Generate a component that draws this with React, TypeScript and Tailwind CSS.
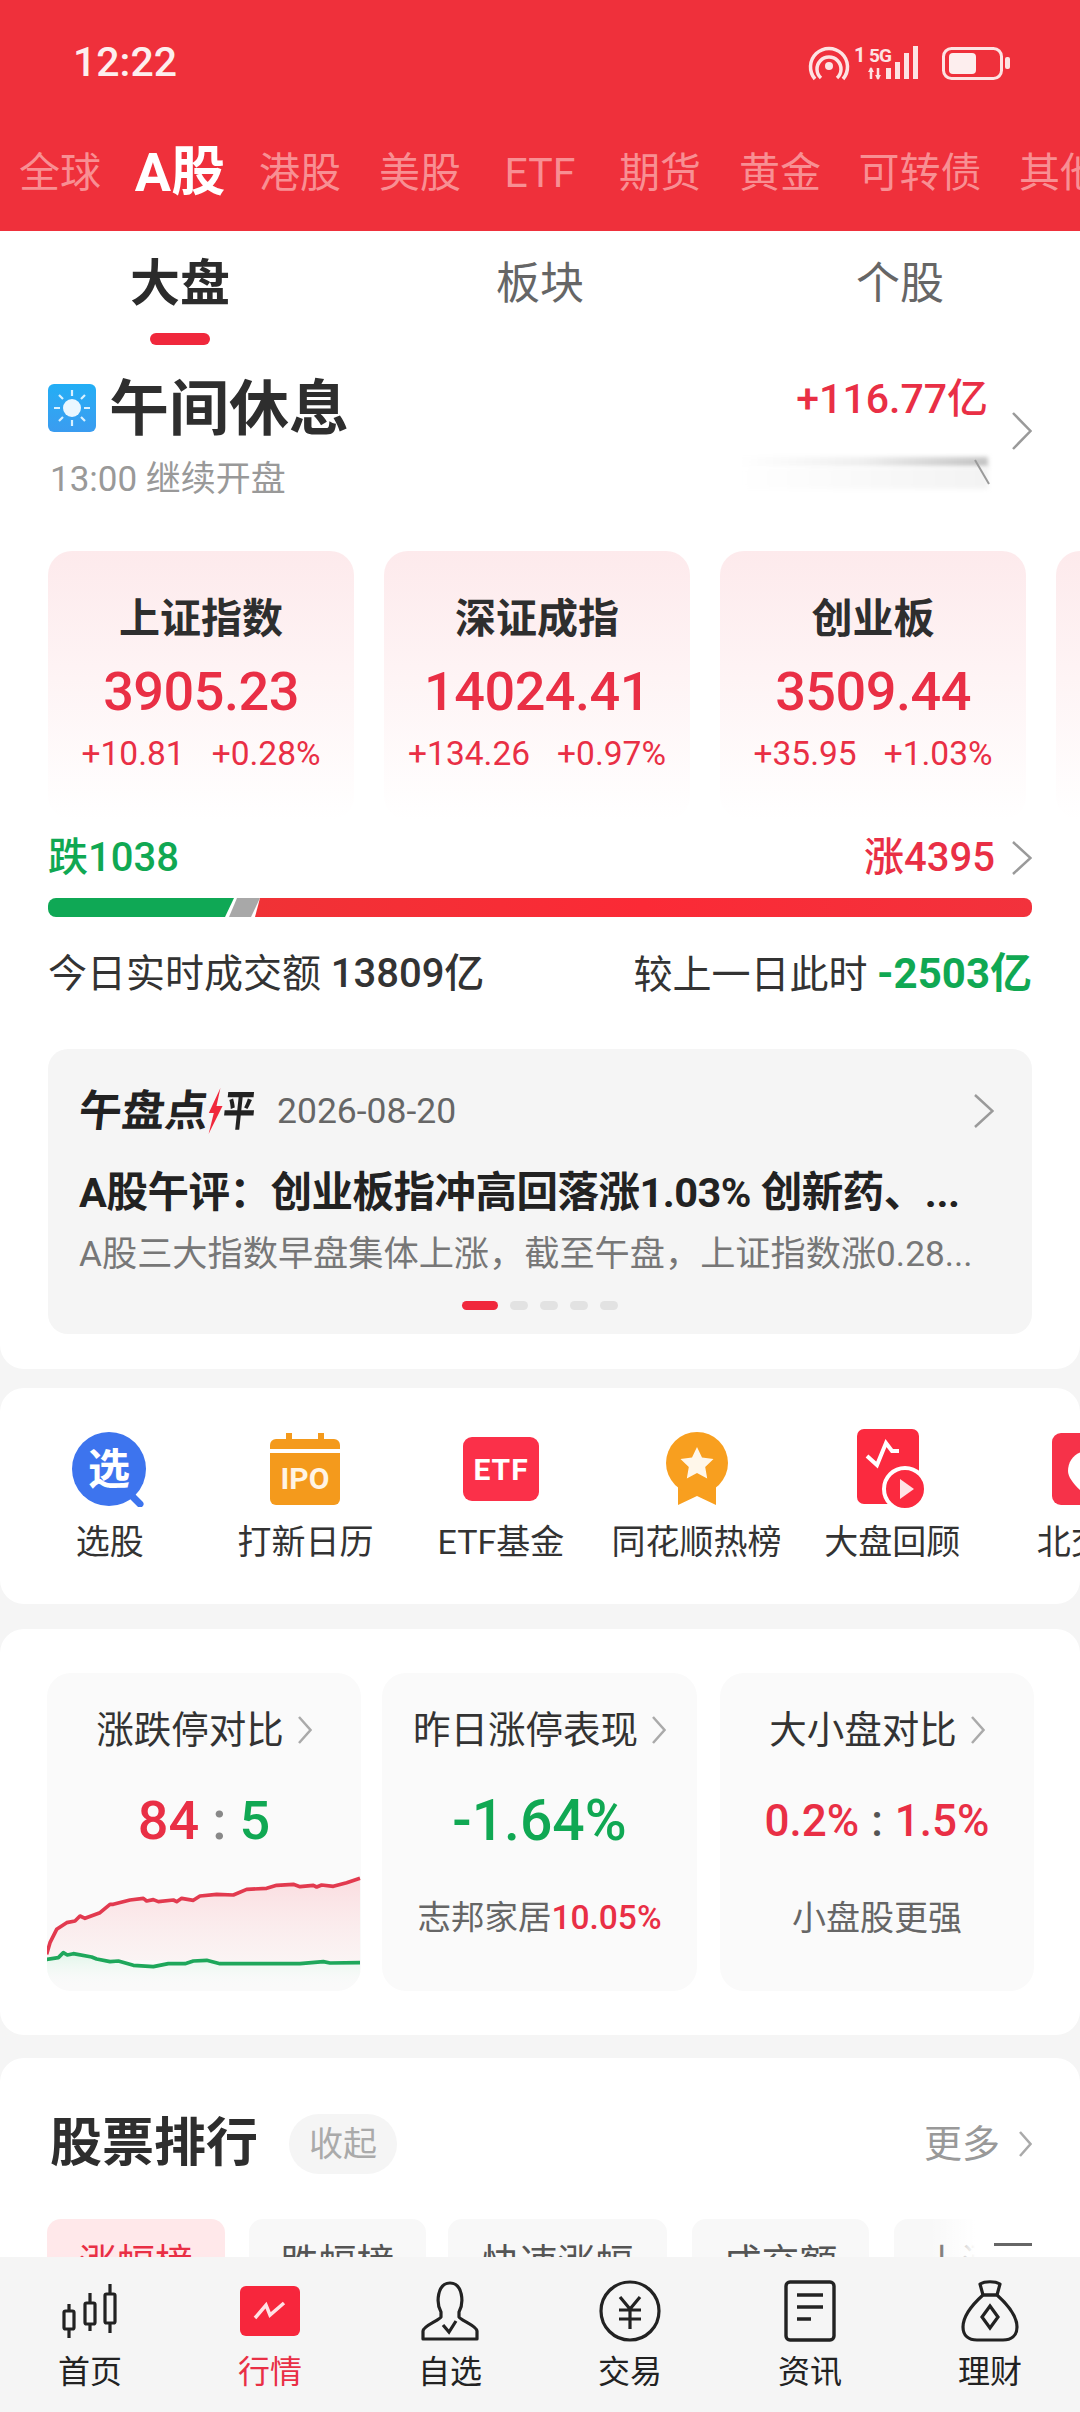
import React from 'react';

const RED = 'text-[#e92f45]';
const GREEN = 'text-[#10a853]';

const Chev = ({ w, h, color = '#9a9a9a', sw = 2.5 }: { w: number; h: number; color?: string; sw?: number }) => (
  <svg width={w} height={h} viewBox={`0 0 ${w} ${h}`} fill="none" className="shrink-0">
    <polyline points={`1,1 ${w - 1.5},${h / 2} 1,${h - 1}`} stroke={color} strokeWidth={sw} />
  </svg>
);

const topTabs = [
  { label: '全球', cls: 'w-[120px] text-[41px] text-[#f88f93]' },
  { label: 'A股', cls: 'w-[120px] text-[54px] font-bold text-white' },
  { label: '港股', cls: 'w-[120px] text-[41px] text-[#f88f93]' },
  { label: '美股', cls: 'w-[120px] text-[41px] text-[#f88f93]' },
  { label: 'ETF', cls: 'w-[120px] text-[41px] text-[#f88f93]' },
  { label: '期货', cls: 'w-[120px] text-[41px] text-[#f88f93]' },
  { label: '黄金', cls: 'w-[120px] text-[41px] text-[#f88f93]' },
  { label: '可转债', cls: 'w-[160px] text-[41px] text-[#f88f93]' },
  { label: '其他', cls: 'w-[120px] text-[41px] text-[#f88f93]' },
];

const indexes = [
  { name: '上证指数', value: '3905.23', diff: '+10.81', pct: '+0.28%' },
  { name: '深证成指', value: '14024.41', diff: '+134.26', pct: '+0.97%' },
  { name: '创业板', value: '3509.44', diff: '+35.95', pct: '+1.03%' },
];

const StatusIcons = () => (
  <svg width="204" height="38" viewBox="0 0 204 38" fill="none" stroke="#fde3e3">
    <circle cx="21" cy="22" r="4" fill="#fde3e3" stroke="none" />
    <path d="M13 34 A12 12 0 1 1 29 34" strokeWidth="3.5" />
    <path d="M7 35 A18.5 18.5 0 1 1 35 35" strokeWidth="3.5" />
    <text x="46" y="18" fontSize="20" fontWeight="700" fill="#fde3e3" stroke="none">1</text>
    <text x="61" y="18" fontSize="19" fontWeight="700" fill="#fde3e3" stroke="none" letterSpacing="-1">5G</text>
    <path d="M63 24v11M70 24v11" strokeWidth="2.5" />
    <path d="M63 23l-3 5h6zM70 36l-3-5h6z" fill="#fde3e3" stroke="none" />
    <rect x="78" y="24" width="5" height="11" fill="#fde3e3" stroke="none" />
    <rect x="87" y="18" width="5" height="17" fill="#fde3e3" stroke="none" />
    <rect x="96" y="9" width="5" height="26" fill="#fde3e3" stroke="none" />
    <rect x="105" y="2" width="5" height="33" fill="#fde3e3" stroke="none" />
    <rect x="135.5" y="4.5" width="58" height="30" rx="8" strokeWidth="3" />
    <rect x="141" y="9" width="27" height="21" rx="4" fill="#fdeeee" stroke="none" />
    <rect x="197" y="13" width="5" height="12" rx="2" fill="#fde3e3" stroke="none" />
  </svg>
);

const SunIcon = () => (
  <div className="flex h-[48px] w-[48px] items-center justify-center rounded-[6px] bg-gradient-to-b from-[#22aef5] to-[#3a9cf0]">
    <svg width="40" height="40" viewBox="0 0 40 40" stroke="#d9f1ff" strokeWidth="2.2">
      <circle cx="20" cy="20" r="9" fill="#eaf7ff" stroke="none" />
      <path d="M20 2v6M20 32v6M2 20h6M32 20h6M7 7l4 4M29 29l4 4M33 7l-4 4M11 29l-4 4" />
    </svg>
  </div>
);

const BreadthBar = () => (
  <svg width="984" height="19" viewBox="0 0 984 19" className="block">
    <defs>
      <linearGradient id="barRed" x1="0" x2="1" y1="0" y2="0">
        <stop offset="0" stopColor="#f03236" />
        <stop offset="0.5" stopColor="#fb2a36" />
        <stop offset="1" stopColor="#f2323c" />
      </linearGradient>
    </defs>
    <path d="M8 0H186L177 19H8a8 8 0 0 1-8-8V8a8 8 0 0 1 8-8z" fill="#0fa855" />
    <path d="M189 0H212L203 19H181z" fill="#a8a8a8" />
    <path d="M212 0H976a8 8 0 0 1 8 8v3a8 8 0 0 1-8 8H207z" fill="url(#barRed)" />
  </svg>
);

const shortcuts = [
  {
    label: '选股',
    icon: (
      <svg width="78" height="76" viewBox="0 0 78 76">
        <path d="M58 62l11 11" stroke="#3d74ee" strokeWidth="7" strokeLinecap="round" />
        <circle cx="38" cy="38" r="37" fill="#3d74ee" />
        <text x="38" y="53" textAnchor="middle" fontSize="42" fontWeight="700" fill="#fff">选</text>
      </svg>
    ),
  },
  {
    label: '打新日历',
    icon: (
      <svg width="70" height="72" viewBox="0 0 70 72">
        <path d="M16 0h6v6h26V0h6v6h10a6 6 0 0 1 6 6v4H0v-4a6 6 0 0 1 6-6h10z" fill="#f49a1c" />
        <path d="M0 20h70v46a6 6 0 0 1-6 6H6a6 6 0 0 1-6-6z" fill="#f49a1c" />
        <text x="35" y="56" textAnchor="middle" fontSize="30" fontWeight="700" fill="#fff4e4">IPO</text>
      </svg>
    ),
  },
  {
    label: 'ETF基金',
    icon: (
      <svg width="76" height="64" viewBox="0 0 76 64">
        <rect width="76" height="64" rx="9" fill="#fb3049" />
        <text x="38" y="43" textAnchor="middle" fontSize="30" fontWeight="700" fill="#fff" letterSpacing="1">ETF</text>
      </svg>
    ),
  },
  {
    label: '同花顺热榜',
    icon: (
      <svg width="62" height="74" viewBox="0 0 62 74">
        <path d="M12 50v23l19-9 19 9V50z" fill="#f89f1f" />
        <circle cx="31" cy="31" r="31" fill="#f89f1f" />
        <path d="M31 15l5 10.5 11.5 1.5-8.3 8 2 11.5L31 41l-10.2 5.5 2-11.5-8.3-8L26 25.5z" fill="#fff7ea" />
      </svg>
    ),
  },
  {
    label: '大盘回顾',
    icon: (
      <svg width="70" height="80" viewBox="0 0 70 80">
        <rect width="62" height="75" rx="7" fill="#fb2a3f" />
        <polyline points="10,27 20,36 29,14 35,22 42,22" fill="none" stroke="#fff" strokeWidth="4" />
        <circle cx="48" cy="60" r="21" fill="#fb2a3f" stroke="#fff" strokeWidth="4" />
        <path d="M43 50l14 10-14 10z" fill="#ffe3e6" />
      </svg>
    ),
  },
  {
    label: '北交所',
    icon: (
      <svg width="72" height="72" viewBox="0 0 72 72">
        <rect width="72" height="72" rx="9" fill="#f63249" />
        <path d="M36 18c-12 0-20 9-20 20 0 8 10 18 20 26 10-8 20-18 20-26 0-11-8-20-20-20z" fill="#fff" />
      </svg>
    ),
  },
];

const redLine =
  'M50 340L60 305L80 265L95 255L110 245L135 240L150 225L165 232L210 215L240 190L250 190L300 177L340 172L350 180L370 176L385 182L430 177L440 182L455 172L490 178L510 165L560 160L610 162L650 145L710 142L740 133L790 130L810 137L850 133L860 138L875 132L910 136L950 125L990 112';
const greenLine =
  'M50 355L85 350L100 335L112 342L130 338L185 348L200 354L240 362L265 360L310 373L370 377L415 368L465 368L490 360L530 358L570 368L810 368L880 362L900 366L990 365';

const LimitChart = () => (
  <svg width="340" height="160" viewBox="0 0 1020 480" fill="none" className="absolute left-[-17px] top-[168px]">
    <defs>
      <linearGradient id="pinkFill" x1="0" x2="0" y1="0" y2="1">
        <stop offset="0" stopColor="#fbdde0" />
        <stop offset="1" stopColor="#fbeeee" stopOpacity="0.5" />
      </linearGradient>
      <linearGradient id="greenFill" x1="0" x2="0" y1="0" y2="1">
        <stop offset="0" stopColor="#dff6e8" />
        <stop offset="1" stopColor="#fafafa" stopOpacity="0" />
      </linearGradient>
    </defs>
    <path d={`${redLine}L990 365L50 355Z`} fill="url(#pinkFill)" />
    <path d={`${greenLine}L990 440L50 440Z`} fill="url(#greenFill)" />
    <path d={redLine} stroke="#e23a4f" strokeWidth="11" strokeLinejoin="round" />
    <path d={greenLine} stroke="#1ea75b" strokeWidth="11" strokeLinejoin="round" />
  </svg>
);

const navItems = [
  {
    label: '首页',
    cls: 'text-[#222]',
    icon: (
      <svg width="60" height="60" viewBox="0 0 60 60" fill="none" stroke="#222" strokeWidth="3.2">
        <path d="M9 23v7M9 48v9M30 12v10M30 43v7M50 3v10M50 42v10" />
        <rect x="4" y="30" width="10" height="18" rx="1.5" />
        <rect x="25" y="22" width="10" height="21" rx="1.5" />
        <rect x="45" y="13" width="10" height="29" rx="1.5" />
      </svg>
    ),
  },
  {
    label: '行情',
    cls: RED,
    icon: (
      <svg width="60" height="60" viewBox="0 0 60 60" fill="none">
        <rect y="5" width="60" height="50" rx="6" fill="#f7263c" />
        <polyline points="15,37 26,24 30,34 44,22" stroke="#ffe1e4" strokeWidth="3.5" />
      </svg>
    ),
  },
  {
    label: '自选',
    cls: 'text-[#222]',
    icon: (
      <svg width="60" height="60" viewBox="0 0 60 60" fill="none" stroke="#222" strokeWidth="3.2">
        <path d="M21 31C16 22 17 2 30 2C43 2 44 22 39 31L39 36C40 39 57 45 57 50L57 58L3 58L3 50C3 45 20 39 21 36Z" strokeLinejoin="round" />
        <polyline points="23,44 29,51 36,40" />
      </svg>
    ),
  },
  {
    label: '交易',
    cls: 'text-[#222]',
    icon: (
      <svg width="62" height="62" viewBox="0 0 62 62" fill="none" stroke="#222" strokeWidth="3.2">
        <ellipse cx="31" cy="31" rx="29" ry="29" />
        <path d="M21 17l10 12 10-12M20 30h22M20 39h22M31 29v20" />
      </svg>
    ),
  },
  {
    label: '资讯',
    cls: 'text-[#222]',
    icon: (
      <svg width="52" height="62" viewBox="0 0 52 62" fill="none" stroke="#222" strokeWidth="3.4">
        <rect x="2" y="2" width="48" height="58" rx="4" />
        <path d="M13 15h26M13 27h26M13 39h14" />
      </svg>
    ),
  },
  {
    label: '理财',
    cls: 'text-[#222]',
    icon: (
      <svg width="58" height="62" viewBox="0 0 58 62" fill="none" stroke="#222" strokeWidth="3.2">
        <path d="M19 4c5-3 15-3 20 0l-3 11H22z" strokeLinejoin="round" />
        <path d="M22 15C12 24 2 36 2 47c0 9 6 13 14 13h26c8 0 14-4 14-13 0-11-10-23-20-32z" />
        <path d="M29 26l8 11-8 11-8-11z" />
      </svg>
    ),
  },
];

export default function App() {
  return (
    <div className="relative h-[2412px] w-[1080px] overflow-hidden bg-[#f5f5f5] font-[Roboto,'Noto_Sans_CJK_SC',sans-serif] text-[#333]">
      {/* Red header */}
      <div className="h-[231px] bg-[#ef303b]">
        <div className="flex h-[124px] items-center justify-between pl-[73px] pr-[68px] pt-[2px]">
          <span className="text-[41px] font-medium text-[#fdeeee]">12:22</span>
          <StatusIcons />
        </div>
        <div className="flex h-[94px] items-center overflow-hidden pt-[4px]">
          {topTabs.map((tab) => (
            <div key={tab.label} className={`shrink-0 text-center leading-[60px] ${tab.cls}`}>
              {tab.label}
            </div>
          ))}
        </div>
      </div>

      {/* Market section */}
      <div className="rounded-b-[24px] bg-white pb-[35px]">
        <div className="grid h-[114px] grid-cols-3">
          <div className="flex flex-col items-center pt-[23px]">
            <span className="text-[50px] font-bold leading-[60px] text-[#2b2b2b]">大盘</span>
            <span className="mt-[19px] h-[12px] w-[60px] rounded-full bg-[#f0283c]" />
          </div>
          <div className="pt-[23px] text-center text-[44px] leading-[60px] text-[#666]">板块</div>
          <div className="pt-[23px] text-center text-[44px] leading-[60px] text-[#666]">个股</div>
        </div>

        <div className="flex justify-between pl-[48px] pr-[48px] pt-[28px]">
          <div>
            <div className="flex items-center gap-[13px] pt-[3px]">
              <SunIcon />
              <span className="pt-[3px] text-[60px] font-bold leading-[61px] text-[#2e2e2e]">午间休息</span>
            </div>
            <div className="mt-[18px] pl-[2px] text-[35px] leading-[44px] text-[#999]">13:00 继续开盘</div>
          </div>
          <div className="flex items-start gap-[24px]">
            <div className="relative flex w-[250px] flex-col items-end pt-[1px]">
              <span className={`text-[41px] font-medium leading-[50px] ${RED}`}>+116.77亿</span>
              <div className="mt-[33px] h-[10px] w-[250px] bg-gradient-to-r from-white via-[#efefef] to-[#c4c4c4] blur-[2px]" />
              <div className="h-[22px] w-[250px] bg-gradient-to-r from-white to-[#f3f3f3] blur-[2px]" />
              <svg width="18" height="26" viewBox="0 0 18 26" fill="none" className="absolute right-[-3px] top-[86px]">
                <path d="M2 1l14 24" stroke="#9a9a9a" strokeWidth="2" />
              </svg>
            </div>
            <div className="pt-[39px]">
              <Chev w={20} h={38} />
            </div>
          </div>
        </div>

        <div className="mt-[49px] flex gap-[30px] overflow-hidden pl-[48px]">
          {indexes.map((item) => (
            <div
              key={item.name}
              className="h-[269px] w-[306px] shrink-0 rounded-[24px] bg-gradient-to-b from-[#fdeaec] to-white pt-[43px] text-center"
            >
              <div className="text-[41px] font-bold leading-[50px] text-[#2e2e2e]">{item.name}</div>
              <div className={`mt-[16px] text-[54px] font-medium leading-[64px] tracking-[-0.5px] ${RED}`}>{item.value}</div>
              <div className={`mt-[10px] flex justify-center gap-[27px] text-[33.5px] leading-[40px] ${RED}`}>
                <span>{item.diff}</span>
                <span>{item.pct}</span>
              </div>
            </div>
          ))}
          <div className="h-[269px] w-[306px] shrink-0 rounded-[24px] bg-gradient-to-b from-[#fdeaec] to-white" />
        </div>

        <div className="mt-[15px] flex items-center justify-between px-[48px] text-[40px] font-medium leading-[46px]">
          <span className={GREEN}>跌1038</span>
          <div className="flex items-center gap-[17px]">
            <span className={RED}>涨4395</span>
            <Chev w={20} h={34} />
          </div>
        </div>

        <div className="mt-[17px] px-[48px]">
          <BreadthBar />
        </div>

        <div className="mt-[32px] flex justify-between px-[48px] text-[39px] leading-[50px] text-[#333]">
          <span>
            今日实时成交额 <span className="text-[40px] font-medium">13809亿</span>
          </span>
          <span>
            较上一日此时 <span className={`text-[42px] font-bold ${GREEN}`}>-2503亿</span>
          </span>
        </div>

        <div className="mx-[48px] mt-[49px] h-[285px] rounded-[20px] bg-[#f5f5f5] px-[31px] pt-[37px]">
          <div className="flex items-center justify-between pr-[7px]">
            <div className="flex items-center">
              <div className="flex h-[50px] w-[198px] -skew-x-6 items-center text-[43px] font-bold leading-[50px] text-[#222]">
                <span>午盘点</span>
                <svg width="15" height="46" viewBox="0 0 15 46" className="shrink-0">
                  <path d="M10 0L1 25h5L3 46 14 18H8z" fill="#f0283c" />
                </svg>
                <span className="inline-block w-[28px] origin-left scale-x-75">平</span>
              </div>
              <span className="text-[35.5px] leading-[50px] text-[#666]">2026-08-20</span>
            </div>
            <Chev w={20} h={34} />
          </div>
          <div className="mt-[32px] whitespace-nowrap text-[41.5px] font-bold leading-[50px] tracking-[-0.5px] text-[#222]">
            A股午评：创业板指冲高回落涨1.03% 创新药、...
          </div>
          <div className="mt-[14px] whitespace-nowrap text-[35.2px] leading-[44px] text-[#777]">
            A股三大指数早盘集体上涨，截至午盘，上证指数涨0.28...
          </div>
          <div className="mt-[25px] flex justify-center gap-[12px]">
            <span className="h-[9px] w-[36px] rounded-full bg-[#f0283c]" />
            <span className="h-[9px] w-[18px] rounded-full bg-[#e2e2e2]" />
            <span className="h-[9px] w-[18px] rounded-full bg-[#e2e2e2]" />
            <span className="h-[9px] w-[18px] rounded-full bg-[#e2e2e2]" />
            <span className="h-[9px] w-[18px] rounded-full bg-[#e2e2e2]" />
          </div>
        </div>
      </div>

      {/* Shortcuts */}
      <div className="mt-[19px] flex h-[216px] overflow-hidden rounded-[24px] bg-white pl-[12px] pt-[41px]">
        {shortcuts.map((item) => (
          <div key={item.label} className="flex w-[195.6px] shrink-0 flex-col items-center">
            <div className="flex h-[80px] items-center justify-center">{item.icon}</div>
            <span className="mt-[11px] whitespace-nowrap text-[34px] leading-[44px] text-[#333]">{item.label}</span>
          </div>
        ))}
      </div>

      {/* Stats */}
      <div className="mt-[25px] flex h-[406px] rounded-[24px] bg-white pl-[47px] pt-[44px]">
        <div className="relative h-[318px] w-[314px] overflow-hidden rounded-[24px] bg-[#fafafa] pt-[33px] text-center">
          <div className="flex items-center justify-center gap-[14px] text-[37.5px] leading-[48px] text-[#333]">
            涨跌停对比 <Chev w={14} h={28} color="#aaa" />
          </div>
          <div className="mt-[35px] text-[54px] font-medium leading-[64px]">
            <span className={RED}>84</span>
            <span className="mx-[13px] text-[#888]">:</span>
            <span className={GREEN}>5</span>
          </div>
          <LimitChart />
        </div>
        <div className="ml-[21px] h-[318px] w-[315px] rounded-[24px] bg-[#fafafa] pt-[33px] text-center">
          <div className="flex items-center justify-center gap-[14px] text-[37.5px] leading-[48px] text-[#333]">
            昨日涨停表现 <Chev w={14} h={28} color="#aaa" />
          </div>
          <div className={`mt-[35px] text-[57px] font-medium leading-[64px] ${GREEN}`}>-1.64%</div>
          <div className="mt-[43px] whitespace-nowrap text-[33.5px] leading-[44px] text-[#666]">
            志邦家居<span className={`font-medium ${RED}`}>10.05%</span>
          </div>
        </div>
        <div className="ml-[23px] h-[318px] w-[314px] rounded-[24px] bg-[#fafafa] pt-[33px] text-center">
          <div className="flex items-center justify-center gap-[14px] text-[37.5px] leading-[48px] text-[#333]">
            大小盘对比 <Chev w={14} h={28} color="#aaa" />
          </div>
          <div className={`mt-[35px] text-[44px] font-medium leading-[64px] ${RED}`}>
            0.2%<span className="mx-[12px] text-[#555]">:</span>1.5%
          </div>
          <div className="mt-[43px] text-[34px] leading-[44px] text-[#666]">小盘股更强</div>
        </div>
      </div>

      {/* Ranking */}
      <div className="relative mt-[23px] h-[400px] rounded-[24px] bg-white pt-[54px]">
        <div className="flex items-center justify-between pl-[50px] pr-[48px]">
          <div className="flex items-center gap-[31px]">
            <span className="text-[52px] font-bold leading-[64px] text-[#2e2e2e]">股票排行</span>
            <span className="rounded-full bg-[#f5f5f5] px-[20px] text-[34px] leading-[60px] text-[#aaa]">收起</span>
          </div>
          <div className="flex items-center gap-[19px]">
            <span className="text-[38px] leading-[50px] text-[#999]">更多</span>
            <Chev w={13} h={26} color="#aaa" />
          </div>
        </div>
        <div className="mt-[43px] flex pl-[47px]">
          <div className="h-[80px] w-[178px] shrink-0 rounded-[14px] bg-[#ffe8ea] pt-[20px] text-center text-[38px] leading-[48px] text-[#e92f45]">涨幅榜</div>
          <div className="ml-[24px] h-[80px] w-[177px] shrink-0 rounded-[14px] bg-[#f8f8f8] pt-[20px] text-center text-[38px] leading-[48px] text-[#555]">跌幅榜</div>
          <div className="ml-[22px] h-[80px] w-[219px] shrink-0 rounded-[14px] bg-[#f8f8f8] pt-[20px] text-center text-[38px] leading-[48px] text-[#555]">快速涨幅</div>
          <div className="ml-[25px] h-[80px] w-[177px] shrink-0 rounded-[14px] bg-[#f8f8f8] pt-[20px] text-center text-[38px] leading-[48px] text-[#555]">成交额</div>
          <div className="ml-[25px] h-[80px] w-[120px] shrink-0 rounded-[14px] bg-[#f8f8f8] pl-[30px] pt-[20px] text-[38px] leading-[48px] text-[#555]">上涨</div>
        </div>
        <div className="absolute right-0 top-[160px] h-[100px] w-[150px] bg-gradient-to-r from-transparent to-white to-[30%] pl-[64px] pt-[25px]">
          <div className="h-[3px] w-[38px] bg-[#666]" />
          <div className="mt-[12px] h-[3px] w-[38px] bg-[#666]" />
        </div>
      </div>

      {/* Bottom nav */}
      <div className="absolute bottom-0 left-0 grid h-[155px] w-full grid-cols-6 bg-[#f5f5f5]">
        {navItems.map((item) => (
          <div key={item.label} className="flex flex-col items-center pt-[23px]">
            <div className="flex h-[62px] items-center justify-center">{item.icon}</div>
            <span className={`mt-[10px] text-[32px] leading-[40px] ${item.cls}`}>{item.label}</span>
          </div>
        ))}
      </div>
    </div>
  );
}
